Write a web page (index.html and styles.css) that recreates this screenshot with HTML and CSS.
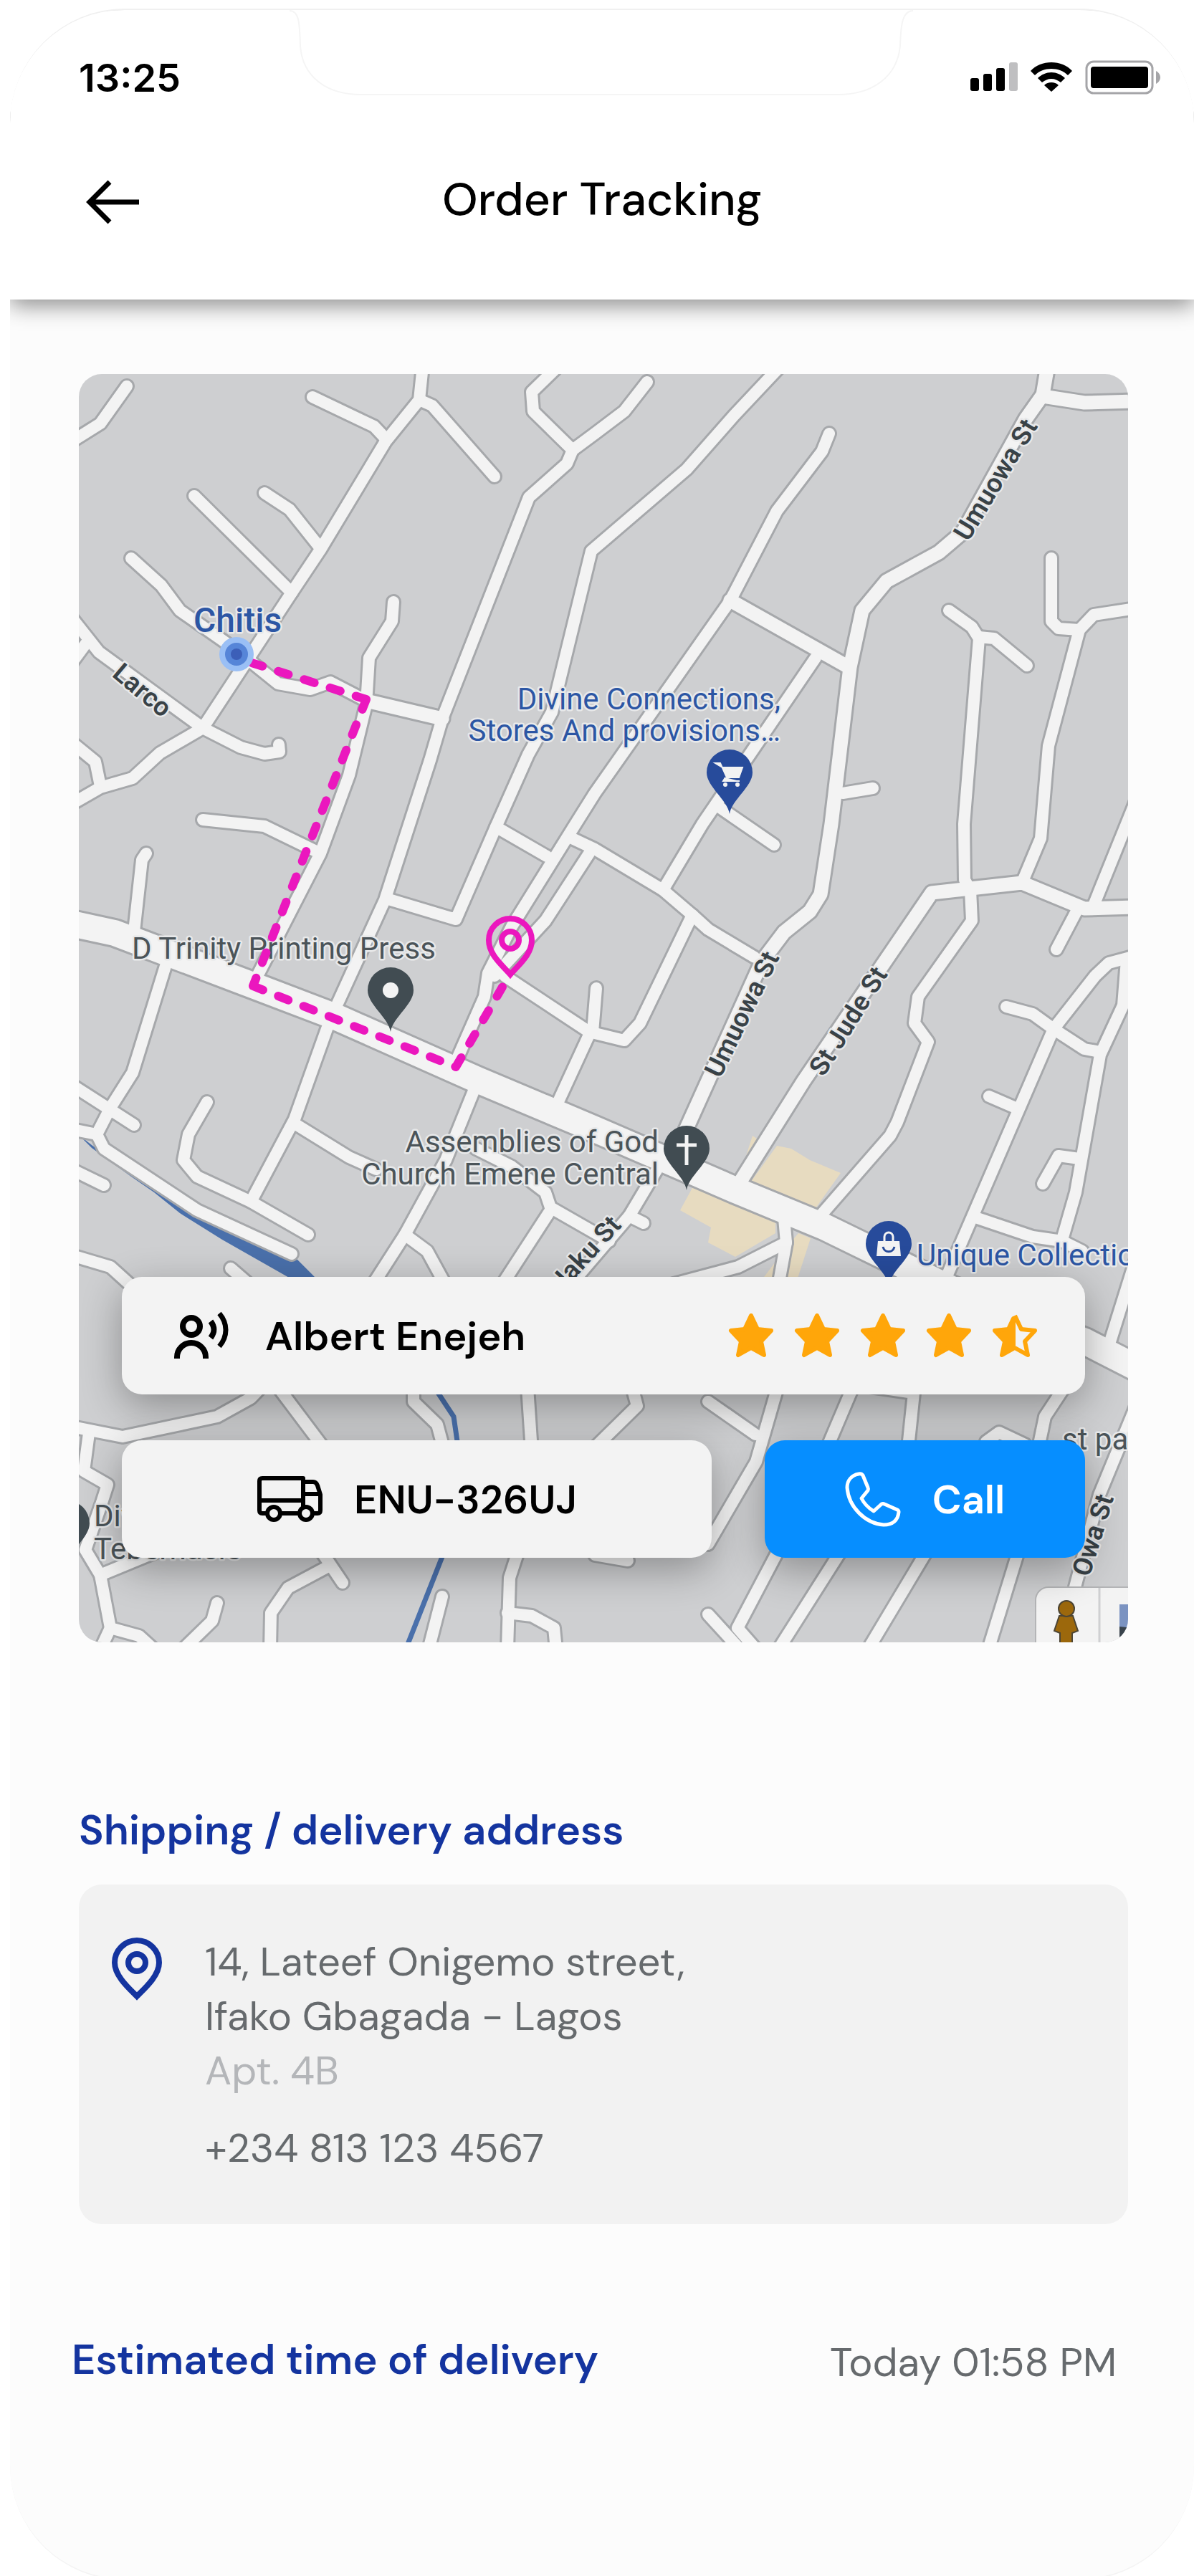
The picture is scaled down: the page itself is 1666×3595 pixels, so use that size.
FILE: index.html
```
<!DOCTYPE html>
<html lang="en">
<head>
    <meta charset="UTF-8">
    <meta name="viewport" content="width=device-width, initial-scale=1.0">
    <title>Order Tracking</title>
    <link rel="stylesheet" href="styles.css">
</head>
<body>
    <div class="phone">
        <header class="top">
            <svg class="notch" viewBox="0 0 870 122" aria-hidden="true">
                <path d="M0 1C14 1 14 20 15 50C18 92 50 118 100 118H765C815 118 848 92 852 50C853 20 855 1 870 1" />
            </svg>
            <div class="status">
                <span class="clock">13:25</span>
                <div class="status-icons">
                    <svg width="66" height="42" viewBox="0 0 66 42">
                        <rect x="0" y="22" width="12" height="18" rx="3" />
                        <rect x="18" y="16" width="12" height="24" rx="3" />
                        <rect x="36" y="8" width="12" height="32" rx="3" />
                        <rect x="54" y="0" width="12" height="40" rx="3" fill="#bfbfc1" />
                    </svg>
                    <svg width="58" height="42" viewBox="0 0 58 42">
                        <path d="M29 0C18 0 7 4 0 12L6 18C12 12 20 9 29 9S46 12 52 18L58 12C51 4 40 0 29 0Z" />
                        <path d="M29 14C22 14 15 17 10 22L16 28C20 25 24 23 29 23S38 25 42 28L48 22C43 17 36 14 29 14Z" />
                        <path d="M29 28C25 28 22 29 19 32L29 41L39 32C36 29 33 28 29 28Z" />
                    </svg>
                    <svg width="106" height="48" viewBox="0 0 106 48">
                        <rect x="2" y="2" width="92" height="44" rx="10" fill="none" stroke="#a5a5a8" stroke-width="3" />
                        <rect x="8" y="9" width="80" height="30" rx="4" />
                        <path d="M99 15C107 19 107 29 99 33Z" fill="#a5a5a8" />
                    </svg>
                </div>
            </div>
            <div class="title-bar">
                <button class="back" type="button" aria-label="Back">
                    <svg width="76" height="62" viewBox="0 0 76 62">
                        <path d="M74 31H5M33 3L5 31L33 59" fill="none" stroke="#000" stroke-width="7" />
                    </svg>
                </button>
                <h1>Order Tracking</h1>
            </div>
        </header>

        <main>
            <section class="map">
                <svg class="map-art" viewBox="110 522 1464 1770">
                    <defs>
                        <g id="roads">
                            <path d="M177 539L140 591L105 613" />
                            <path d="M436 554L522 595L538 612" />
                            <path d="M590 510L585 558L538 616L447 767L407 827L283 1016L223 1051L185 1086L140 1099L100 1122" />
                            <path d="M585 558L603 566L690 665" />
                            <path d="M271 692L407 827" />
                            <path d="M369 688L404 711L447 765" />
                            <path d="M183 779L225 817L251 852L331 908L388 954L433 962L461 952L511 978L617 1003" />
                            <path d="M100 862L138 910L283 1016L336 1043L369 1052L390 1049L389 1039" />
                            <path d="M100 925L120 898" />
                            <path d="M100 1036L133 1063L140 1097" />
                            <path d="M549 840L547 867L515 918L511 983L487 1082L447 1191L357 1366" />
                            <path d="M283 1144L369 1153L445 1190" />
                            <path d="M778 512L742 547L744 574L799 628L791 647L738 694L617 1003L600 1061L537 1256L468 1407L456 1436L411 1562L350 1677" />
                            <path d="M799 628L830 605L871 574L903 533" />
                            <path d="M1088 512L1024 580L958 655L825 769L770 994L737 1053L692 1154L636 1283L539 1254" />
                            <path d="M692 1154L763 1195" />
                            <path d="M1157 605L1147 630L1084 713L1019 838L830 1107L803 1150L714 1293L681 1358L676 1391L636 1482" />
                            <path d="M1138 918L980 1150L925 1242" />
                            <path d="M1000 1124L1080 1179" />
                            <path d="M794 1168L830 1185L925 1242L966 1277L988 1297L1053 1336" />
                            <path d="M822 1191L761 1285L690 1362" />
                            <path d="M832 1379L827 1440" />
                            <path d="M704 1362L822 1440L871 1452L893 1428L966 1277" />
                            <path d="M822 1444L775 1546" />
                            <path d="M1176 1107L1218 1100" />
                            <path d="M1324 852L1356 875L1366 891L1345 1150L1346 1228L1354 1242L1356 1285L1281 1391L1276 1428L1295 1454L1252 1566L1242 1585L1140 1702" />
                            <path d="M1366 889L1387 891L1433 929" />
                            <path d="M1467 779V867L1477 877L1506 879L1526 858L1584 849" />
                            <path d="M1506 879L1463 1041L1452 1170L1426 1232" />
                            <path d="M1584 1120L1525 1266" />
                            <path d="M1504 1268L1474 1325" />
                            <path d="M1584 1334L1547 1344L1528 1362L1470 1436L1315 1795" />
                            <path d="M1404 1405L1441 1415L1470 1436L1513 1464L1535 1468" />
                            <path d="M1572 1340L1567 1403L1535 1472L1501 1664L1482 1730" />
                            <path d="M1380 1530L1417 1546" />
                            <path d="M1455 1652L1477 1613L1506 1617" />
                            <path d="M1361 1699L1441 1726L1482 1732L1510 1746" />
                            <path d="M204 1191L198 1200L187 1300" />
                            <path d="M235 1335L185 1497L154 1546L135 1583L145 1603L275 1689L407 1750" />
                            <path d="M100 1514L187 1570" />
                            <path d="M100 1576L135 1583" />
                            <path d="M289 1538L263 1583L256 1619L275 1642L350 1677L430 1723" />
                            <path d="M100 1632L145 1654" />
                            <path d="M411 1568L487 1615L525 1632" />
                            <path d="M664 1515L622 1619L565 1723L522 1790" />
                            <path d="M664 1603L714 1628L761 1664L768 1685L850 1732" />
                            <path d="M768 1689L696 1800" />
                            <path d="M565 1723L596 1746L620 1790" />
                            <path d="M100 1752L154 1768L195 1805" />
                            <path d="M322 1770L345 1790" />
                            <path d="M918 1630L878 1697L898 1707" />
                            <path d="M878 1697L790 1800" />
                            <path d="M1094 1700L1097 1734L1030 1768L940 1792" />
                            <path d="M1097 1734L1085 1800" />
                            <path d="M100 1991L171 2005L303 1977L350 1951L375 1925" />
                            <path d="M124 2000L117 2053L150 2072L142 2097L119 2163L140 2198L154 2272L194 2283L215 2302" />
                            <path d="M154 2272L140 2302" />
                            <path d="M140 2198L220 2165" />
                            <path d="M388 1936L455 2025" />
                            <path d="M577 1940V1956L610 1988L620 2025" />
                            <path d="M736 1936L742 2025" />
                            <path d="M460 2185L402 2216L378 2251L377 2302M445 2160L478 2209" />
                            <path d="M303 2237L296 2262L255 2302" />
                            <path d="M617 2228L598 2302" />
                            <path d="M723 2165L711 2202L708 2302" />
                            <path d="M708 2251L742 2255L773 2272L776 2302" />
                            <path d="M882 1936L889 1962L830 2020" />
                            <path d="M830 2170L876 2178" />
                            <path d="M1085 1936L1055 2040L988 2155" />
                            <path d="M988 1956L1054 2002" />
                            <path d="M1190 1936L1150 2030" />
                            <path d="M1180 1930L1275 1944L1266 2030" />
                            <path d="M1485 1936L1458 1977L1448 2025" />
                            <path d="M1376 2012L1394 1999L1430 2016" />
                            <path d="M1584 1760L1545 1885" />
                            <path d="M1584 1965L1534 2086L1496 2230" />
                            <path d="M1088 2160L1029 2272L1058 2305" />
                            <path d="M988 2253L1040 2310" />
                            <path d="M1173 2165L1086 2302" />
                            <path d="M1293 2165L1211 2302" />
                            <path d="M1421 2165L1379 2302" />
                        </g>
                        <g id="streets">
                            <path d="M1462 510L1455 551L1431 585L1344 742L1310 771L1237 811L1203 852L1186 931L1160 1150L1145 1248L1130 1272L1094 1301L1063 1342L951 1590" />
                            <path d="M1455 553L1513 562L1584 560" />
                            <path d="M1019 838L1184 931" />
                            <path d="M511 978L617 1003" />
                            <path d="M1584 1266L1513 1268L1426 1232L1300 1246L1121 1509L1026 1660" />
                        </g>
                        <path id="highway" d="M100 1289L160 1302L350 1374L468 1419L666 1507L830 1576L1024 1660L1150 1712L1330 1800L1514 1872L1584 1908" />
                        <path id="pin" d="M0 0C-3 -20 -32 -38 -32 -58A32 32 0 0 1 32 -58C32 -38 3 -20 0 0Z" />
                    </defs>

                    <rect x="110" y="522" width="1464" height="1770" fill="#cecfd1" />

                    <!-- plots and water -->
                    <g fill="#e7dbc0">
                        <path d="M1084 1599L1104 1603L1130 1619L1173 1637L1138 1686L1047 1650Z" />
                        <path d="M967 1656L1082 1705V1721L1026 1754L988 1734L992 1713L949 1689Z" />
                        <path d="M1114 1721L1131 1728L1111 1790H1060L1098 1740Z" />
                        <path d="M1050 1585L1056 1589L1041 1613Z" />
                    </g>
                    <path d="M110 1584L128 1598L183 1638L270 1690L412 1755L445 1788H412L310 1730L251 1693L215 1664L183 1642L128 1602Z" fill="#4a70ab" />
                    <path d="M606 1936L633 1977L640 2025M620 2165L566 2302" fill="none" stroke="#4a70ab" stroke-width="7" />

                    <!-- road outlines, then road surface -->
                    <g class="road edge">
                        <use href="#roads" stroke-width="22" />
                        <use href="#streets" stroke-width="25" />
                        <use href="#highway" stroke-width="42" />
                    </g>
                    <g class="road">
                        <use href="#roads" stroke-width="16" />
                        <use href="#streets" stroke-width="19" />
                        <use href="#highway" stroke-width="36" />
                    </g>

                    <g class="street-name">
                        <text transform="translate(155 943) rotate(40)">Larco</text>
                        <text transform="translate(1351 757) rotate(-59)">Umuowa St</text>
                        <text transform="translate(1005 1506) rotate(-64)">Umuowa St</text>
                        <text transform="translate(1149 1504) rotate(-58)">St Jude St</text>
                        <text transform="translate(781 1808) rotate(-48)">Naku St</text>
                        <text transform="translate(1520 2202) rotate(-73)">Owa St</text>
                    </g>

                    <g class="place">
                        <text x="184" y="1338">D Trinity Printing Press</text>
                        <text x="919" y="1608" text-anchor="end">Assemblies of God</text>
                        <text x="919" y="1653" text-anchor="end">Church Emene Central</text>
                        <text x="131" y="2130">Divine</text>
                        <text x="131" y="2176">Tebernacle</text>
                        <text x="1482" y="2023">st patrick</text>
                    </g>
                    <g class="place shop">
                        <text x="270" y="882" class="current">Chitis</text>
                        <text x="1089" y="990" text-anchor="end">Divine Connections,</text>
                        <text x="1089" y="1034" text-anchor="end">Stores And provisions…</text>
                        <text x="1279" y="1766">Unique Collections</text>
                    </g>

                    <path d="M511 976L345 923M511 976L353 1376M353 1376L636 1489M636 1489L703 1374" class="route" />
                    <circle cx="330" cy="913" r="24" fill="#9abff5" />
                    <circle cx="330" cy="913" r="16" fill="#5685d8" />
                    <circle cx="330" cy="913" r="8" fill="#3c5fb8" />

                    <!-- place pins -->
                    <use href="#pin" transform="translate(545 1440)" fill="#414c52" />
                    <circle cx="545" cy="1382" r="11" fill="#f3f3f3" />
                    <use href="#pin" transform="translate(958 1661)" fill="#414c52" />
                    <path d="M958 1584V1626M944 1598H972" stroke="#f3f3f3" stroke-width="5" />
                    <use href="#pin" transform="translate(93 2184)" fill="#414c52" />
                    <use href="#pin" transform="translate(1018 1136)" fill="#274b9b" />
                    <path d="M998 1065H1005L1014 1085H1031L1036 1071H1008ZM1012 1085L1009 1090H1032" fill="#f3f3f3" stroke="#f3f3f3" stroke-width="2" />
                    <circle cx="1012" cy="1095" r="3" fill="#f3f3f3" />
                    <circle cx="1029" cy="1095" r="3" fill="#f3f3f3" />
                    <use href="#pin" transform="translate(1240 1794)" fill="#274b9b" />
                    <path d="M1225 1732H1255L1257 1753H1223Z" fill="#f3f3f3" />
                    <path d="M1234 1733V1726A6 6 0 0 1 1246 1726V1733" fill="none" stroke="#f3f3f3" stroke-width="3" />
                    <path d="M1232 1740C1234 1749 1246 1749 1248 1740" fill="none" stroke="#274b9b" stroke-width="3" />

                    <!-- delivery pin -->
                    <g fill="none" stroke="#eb17be" stroke-width="8">
                        <path d="M712 1360C700 1346 682 1332 682 1312A30 30 0 0 1 742 1312C742 1332 724 1346 712 1360Z" />
                        <circle cx="712" cy="1312" r="12" />
                    </g>

                    <!-- street view control -->
                    <rect x="1445" y="2215" width="160" height="110" rx="18" fill="#f3f3f3" stroke="#b4b5b7" stroke-width="2" />
                    <path d="M1534 2216V2292" stroke="#cfd0d2" stroke-width="3" />
                    <g fill="#9c680c" stroke="#4c4535" stroke-width="2">
                        <path d="M1478 2255L1471 2276L1479 2279V2300H1496V2279L1504 2276L1497 2255Z" />
                        <circle cx="1488" cy="2245" r="11" />
                    </g>
                    <path d="M1562 2239H1580V2272H1562Z" fill="#7b93c1" />
                    <path d="M1562 2270L1580 2272V2292H1562Z" fill="#39434c" />
                </svg>

                <div class="courier">
                    <div class="panel driver">
                        <svg width="78" height="68" viewBox="0 0 78 68" fill="none" stroke="#000" stroke-width="8">
                            <circle cx="25" cy="21" r="12" />
                            <path d="M5 66V64A20 20 0 0 1 45 64V66" />
                            <path d="M52 14C58 22 58 29 52 37" />
                            <path d="M64 3C76 17 76 35 64 49" stroke-width="7" />
                        </svg>
                        <span class="name">Albert Enejeh</span>
                        <div class="stars" role="img" aria-label="4.5 out of 5">
                            <svg viewBox="0 0 64 64"><path d="M32 4L41 23L60 25L46 40L50 59L32 49L14 59L18 40L4 25L23 23Z" /></svg>
                            <svg viewBox="0 0 64 64"><path d="M32 4L41 23L60 25L46 40L50 59L32 49L14 59L18 40L4 25L23 23Z" /></svg>
                            <svg viewBox="0 0 64 64"><path d="M32 4L41 23L60 25L46 40L50 59L32 49L14 59L18 40L4 25L23 23Z" /></svg>
                            <svg viewBox="0 0 64 64"><path d="M32 4L41 23L60 25L46 40L50 59L32 49L14 59L18 40L4 25L23 23Z" /></svg>
                            <svg viewBox="0 0 64 64"><path d="M30 8L23 23L4 25L18 40L14 59L30 50Z" /><path class="hollow" d="M32 4L41 23L60 25L46 40L50 59L32 49" /></svg>
                        </div>
                    </div>
                    <div class="courier-row">
                        <div class="panel plate">
                            <svg width="92" height="66" viewBox="0 0 92 66" fill="none" stroke="#000" stroke-width="6" stroke-linejoin="round">
                                <path d="M14 53H8Q4 53 4 49V8Q4 4 8 4H65V53H34M4 35H65V53" />
                                <path d="M65 9H79Q83 9 85 14L89 27V49Q89 53 85 53H80M65 26H88" />
                                <circle cx="24" cy="53" r="9" fill="#f3f3f3" />
                                <circle cx="69" cy="53" r="9" fill="#f3f3f3" />
                            </svg>
                            <span>ENU-326UJ</span>
                        </div>
                        <button class="panel call" type="button">
                            <svg width="78" height="78" viewBox="0 0 78 78" fill="none" stroke="#fff" stroke-width="5" stroke-linejoin="round">
                                <path d="M19 4C9 6 3 13 3 23C5 50 28 73 54 75C66 75 74 69 75 57Q75 55 73 54L55 46Q53 45 51 46L40 56C32 51 27 46 23 38L32 27Q33 25 32 23L25 6Q23 3 19 4Z" />
                            </svg>
                            <span>Call</span>
                        </button>
                    </div>
                </div>
            </section>

            <section class="shipping">
                <h2>Shipping / delivery address</h2>
                <div class="address-card">
                    <svg width="70" height="88" viewBox="0 0 70 88" fill="none" stroke="#14349f" stroke-width="8">
                        <path d="M35 82C23 70 4 53 4 35A31 31 0 0 1 66 35C66 53 47 70 35 82Z" />
                        <circle cx="35" cy="35" r="12" />
                    </svg>
                    <address>
                        <p>14, Lateef Onigemo street,</p>
                        <p>Ifako Gbagada - Lagos</p>
                        <p class="apt">Apt. 4B</p>
                        <p class="tel">+234 813 123 4567</p>
                    </address>
                </div>
            </section>

            <section class="eta">
                <h2>Estimated time of delivery</h2>
                <span>Today 01:58 PM</span>
            </section>
        </main>
    </div>
</body>
</html>
```
FILE: styles.css
```
* {
    margin: 0;
    padding: 0;
    box-sizing: border-box;
}

body {
    background-color: #fff;
    color: #000;
    font-family: "DM Sans", Inter, sans-serif;
    padding: 12px 0 0 14px;
}

button {
    border: none;
    background: none;
    font: inherit;
    cursor: pointer;
}

svg {
    display: block;
    flex-shrink: 0;
}

.phone {
    position: relative;
    background-color: #fcfcfc;
    border-radius: 160px;
    border-top: 2px solid #f0f0f0;
    border-bottom: 2px solid #f4f4f4;
    overflow: hidden;
}

/* header */
.top {
    position: relative;
    background-color: #fff;
    box-shadow: 0 8px 30px rgba(0, 0, 0, 0.45);
}

.notch {
    position: absolute;
    top: 0;
    left: 50%;
    width: 870px;
    margin-left: -436px;
    fill: #fff;
    stroke: #f5f5f5;
    stroke-width: 2;
}

.status {
    position: relative;
    display: flex;
    align-items: center;
    justify-content: space-between;
    height: 188px;
    padding: 0 46px 0 96px;
}

.clock {
    font-family: Inter, sans-serif;
    font-size: 54px;
    font-weight: 600;
}

.status-icons {
    display: flex;
    align-items: center;
    gap: 18px;
}

.title-bar {
    display: grid;
    grid-template-columns: 1fr auto 1fr;
    align-items: center;
    height: 216px;
    padding: 0 106px 56px;
}

.back {
    justify-self: start;
}

h1 {
    font-size: 64px;
    font-weight: 500;
    line-height: 72px;
    padding-bottom: 6px;
}

main {
    padding: 104px 92px 266px 96px;
}

/* map */
.map {
    position: relative;
    border-radius: 32px;
    overflow: hidden;
}

.map-art {
    width: 100%;
    height: auto;
}

.road {
    fill: none;
    stroke: #f3f3f3;
    stroke-linecap: round;
    stroke-linejoin: round;
}

.edge {
    stroke: #a6a8ab;
}

.map-art text {
    font-family: Roboto, sans-serif;
    paint-order: stroke;
    stroke: #e8e9ea;
    stroke-width: 5px;
    stroke-linejoin: round;
}

.place {
    font-size: 42px;
    fill: #4b5459;
}

.shop {
    fill: #2c56a4;
}

.current {
    font-size: 48px;
    font-weight: 500;
}

.map-art .street-name {
    font-size: 37px;
    font-weight: 600;
    fill: #394247;
}

.route {
    fill: none;
    stroke: #eb17be;
    stroke-width: 12;
    stroke-linecap: round;
    stroke-dasharray: 15 23;
}

.courier {
    position: absolute;
    left: 60px;
    right: 60px;
    bottom: 118px;
    display: flex;
    flex-direction: column;
    gap: 64px;
}

.courier-row {
    display: grid;
    grid-template-columns: 823fr 447fr;
    gap: 74px;
}

.panel {
    display: flex;
    align-items: center;
    height: 164px;
    border-radius: 28px;
    background-color: #f3f3f3;
    box-shadow: 0 16px 56px rgba(0, 0, 0, 0.32);
    font-size: 56px;
    font-weight: 600;
}

.driver {
    padding: 0 66px 0 72px;
    gap: 50px;
}

.stars {
    display: flex;
    gap: 28px;
    margin-left: auto;
}

.stars svg {
    width: 64px;
    height: 64px;
    fill: #ffa60a;
    stroke: #ffa60a;
    stroke-width: 6;
    stroke-linejoin: round;
}

.stars .hollow {
    fill: none;
}

.plate,
.call {
    justify-content: center;
    gap: 44px;
}

.call {
    background-color: #068eff;
    color: #fff;
}

/* details */
h2 {
    color: #14349f;
    font-size: 58px;
    font-weight: 600;
    line-height: 72px;
}

.shipping {
    margin-top: 226px;
}

.address-card {
    display: flex;
    gap: 60px;
    margin-top: 40px;
    padding: 70px 46px 68px;
    border-radius: 32px;
    background-color: #f2f2f2;
}

.address-card svg {
    margin-top: 4px;
}

address {
    color: #666a6d;
    font-size: 56px;
    font-style: normal;
    line-height: 76px;
}

.apt {
    color: #b4b6b9;
}

.tel {
    margin-top: 32px;
}

.eta {
    display: flex;
    align-items: center;
    justify-content: space-between;
    margin: 148px 16px 0 -10px;
}

.eta span {
    color: #666a6d;
    font-size: 56px;
    padding-top: 8px;
}
```
